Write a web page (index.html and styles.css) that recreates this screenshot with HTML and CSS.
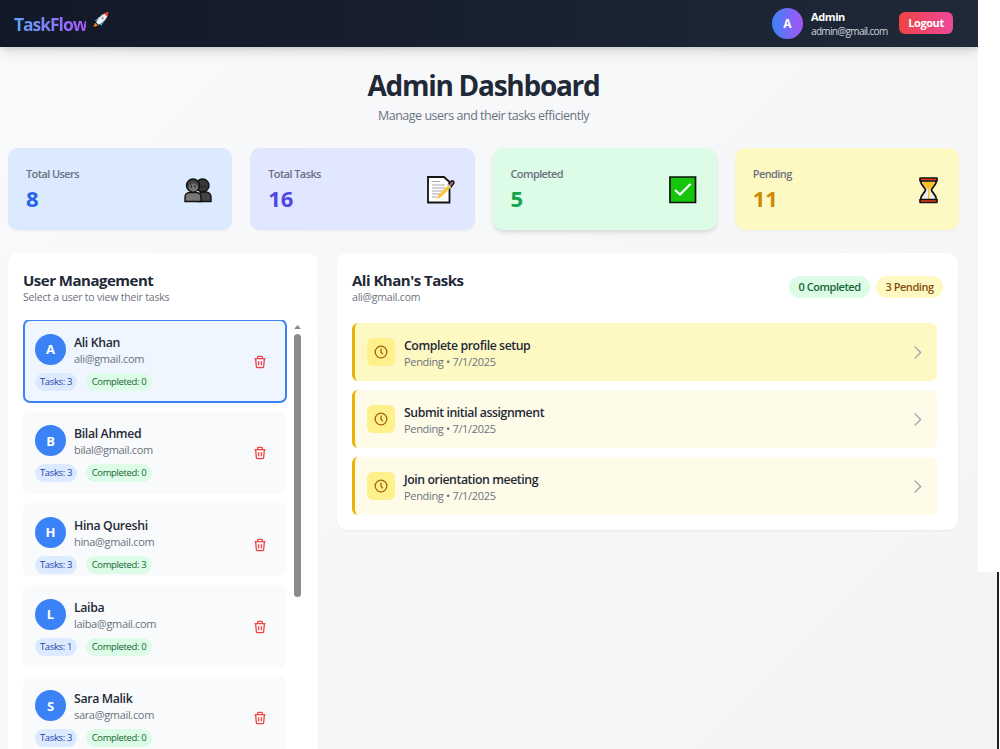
FILE: index.html
```html
<!DOCTYPE html>
<html lang="en">
<head>
<meta charset="utf-8">
<title>TaskFlow</title>
<link rel="stylesheet" href="styles.css">
</head>
<body>
<svg class="defs" width="0" height="0">
  <defs>
    <symbol id="trash" viewBox="0 0 16 16"><path d="M1.800 4.200h12.400M3 4.200l.8 8.800c.1 1 .6 1.500 1.500 1.500h5.400c.9 0 1.400-.5 1.500-1.500l.8-8.800M5.300 4V2.600c0-.7.4-1.100 1.100-1.100h3.200c.7 0 1.100.4 1.100 1.100V4M6.400 7v4.600M9.600 7v4.600"/></symbol>
    <symbol id="clock" viewBox="0 0 24 24"><circle cx="12" cy="12" r="10"/><path d="M12 6v6l3 4"/></symbol>
    <symbol id="chev" viewBox="0 0 24 24"><path d="M8 3l9 9-9 9"/></symbol>
  </defs>
</svg>
<div class="shell">
<div class="page">
  <header class="top">
    <div class="brand"><span class="logo">TaskFlow</span>
      <svg class="rocket" viewBox="0 0 18 18"><path d="M4.500 8L8 6.500 11.500 10 10 14l-2.500.5z M2 16l1-4 3 3z" fill="#10141f" stroke="#10141f" stroke-width="1.500"/><path d="M3 9.500l4-3.500 5 5-3 4-1.500-2-3-2z" fill="#27b5ee"/><path d="M1.500 16l1.500-4.200 3 3z" fill="#ff8c1a"/><path d="M4 11.500C5.500 7 9.500 2.500 16.300 1 16 7.500 11.500 12 6.500 14z" fill="#f2f2f2" stroke="#10141f" stroke-width=".5"/><path d="M11.800 2.600L16.600 .8l-1 5z" fill="#f03a3a"/><circle cx="10.600" cy="7" r="1.500" fill="#a9b3bd"/></svg>
    </div>
    <div class="account">
      <div class="avatar grad">A</div>
      <div class="who"><div class="who-name">Admin</div><div class="who-mail">admin@gmail.com</div></div>
      <div class="logout">Logout</div>
    </div>
  </header>
  <main class="main">
    <h1 class="title"><span>Admin Dashboard</span></h1>
    <p class="sub"><span>Manage users and their tasks efficiently</span></p>
    <section class="stats">
      <div class="stat blue"><div><div class="label">Total Users</div><div class="num">8</div></div>
        <svg class="emoji" viewBox="0 0 28 28"><g stroke="#111" stroke-width="1.400"><path d="M14 25.500v-5a5 5 0 015-4.500h3a5 5 0 015 5v4.500z" fill="#444"/><circle cx="18.500" cy="9.500" r="6.500" fill="#383838"/><path d="M1 25.500V21a4.500 4.500 0 014.500-4.500h7A4.500 4.500 0 0117 21v4.500z" fill="#777"/><circle cx="9" cy="9.500" r="6.500" fill="#444"/></g><path d="M5 11c0-3 3-2 5-4 1 2 4 1 4 4 0 6-9 6-9 0z" fill="#777"/><path d="M7.500 9.500v2M11 9.500v2M17.500 9.500v2M21 9.500v2" stroke="#111" stroke-width="1.200"/></svg></div>
      <div class="stat indigo"><div><div class="label">Total Tasks</div><div class="num">16</div></div>
        <svg class="emoji" viewBox="0 0 28 28"><path d="M1 1h16l5.500 5v20.500H1z" fill="#fff" stroke="#151515" stroke-width="1.800"/><path d="M5 5.500h8M5 9h13M5 12h13M5 15h12M5 18h9M5 21h5" stroke="#aaa" stroke-width="1.100"/><path d="M9.500 23l2-4L22.500 7.800l2.500 2.500-11.500 11.200z" fill="#f9c63d"/><path d="M21.500 8.500l3-3.500a1.700 1.700 0 012.200 2.300L24 11z" fill="#d77b75" stroke="#151515" stroke-width="1.500"/><path d="M21 8.500l2.800 2.700" stroke="#ddd" stroke-width="1.200"/></svg></div>
      <div class="stat green"><div><div class="label">Completed</div><div class="num">5</div></div>
        <svg class="emoji" viewBox="0 0 28 28"><path d="M1 1h25.500v25.500H1z" fill="#16c60c" stroke="#111" stroke-width="1.700"/><path d="M6 14l5 4.500L21.500 8" fill="none" stroke="#fff" stroke-width="2.200"/></svg></div>
      <div class="stat yellow"><div><div class="label">Pending</div><div class="num">11</div></div>
        <svg class="emoji" viewBox="0 0 28 28"><path d="M6.500 4c0 6 5 7.500 5 10s-5 4-5 10h16c0-6-5-7.500-5-10s5-4 5-10z" fill="#eee" stroke="#111" stroke-width="1.800"/><path d="M8.500 6h12.500c-.7 4.500-4.700 5.500-5.600 8V24h-1.400V14c-.9-2.500-4.800-3.500-5.500-8z" fill="#fbbf24"/><path d="M6 2h17v3H6zM6 23.500h17v3H6z" fill="#f03a17" stroke="#111" stroke-width="1.500" stroke-linejoin="round"/></svg></div>
    </section>
    <section class="cols">
      <div class="panel users">
        <h2 class="h2">User Management</h2>
        <p class="note">Select a user to view their tasks</p>
        <div class="scroll">
          <div class="list">
            <div class="user active"><div class="info"><div class="id"><div class="avatar">A</div><div><div class="name">Ali Khan</div><div class="mail">ali@gmail.com</div></div></div><div class="tags"><span class="tag tb">Tasks: 3</span><span class="tag tg">Completed: 0</span></div></div><svg class="trash"><use href="#trash"/></svg></div>
            <div class="user"><div class="info"><div class="id"><div class="avatar">B</div><div><div class="name">Bilal Ahmed</div><div class="mail">bilal@gmail.com</div></div></div><div class="tags"><span class="tag tb">Tasks: 3</span><span class="tag tg">Completed: 0</span></div></div><svg class="trash"><use href="#trash"/></svg></div>
            <div class="user short"><div class="info"><div class="id"><div class="avatar">H</div><div><div class="name">Hina Qureshi</div><div class="mail">hina@gmail.com</div></div></div><div class="tags"><span class="tag tb">Tasks: 3</span><span class="tag tg">Completed: 3</span></div></div><svg class="trash"><use href="#trash"/></svg></div>
            <div class="user"><div class="info"><div class="id"><div class="avatar">L</div><div><div class="name">Laiba</div><div class="mail">laiba@gmail.com</div></div></div><div class="tags"><span class="tag tb">Tasks: 1</span><span class="tag tg">Completed: 0</span></div></div><svg class="trash"><use href="#trash"/></svg></div>
            <div class="user"><div class="info"><div class="id"><div class="avatar">S</div><div><div class="name">Sara Malik</div><div class="mail">sara@gmail.com</div></div></div><div class="tags"><span class="tag tb">Tasks: 3</span><span class="tag tg">Completed: 0</span></div></div><svg class="trash"><use href="#trash"/></svg></div>
          </div>
          <div class="bar"><div class="arrow"></div><div class="thumb"></div></div>
        </div>
      </div>
      <div class="panel tasks">
        <div class="head">
          <div><h2 class="h2">Ali Khan's Tasks</h2><p class="note">ali@gmail.com</p></div>
          <div class="pills"><span class="pill pg">0 Completed</span><span class="pill py">3 Pending</span></div>
        </div>
        <div class="task hot"><span class="tile"><svg class="clock"><use href="#clock"/></svg></span><div class="tt"><div class="tname">Complete profile setup</div><div class="tmeta">Pending • 7/1/2025</div></div><svg class="chev"><use href="#chev"/></svg></div>
        <div class="task"><span class="tile"><svg class="clock"><use href="#clock"/></svg></span><div class="tt"><div class="tname">Submit initial assignment</div><div class="tmeta">Pending • 7/1/2025</div></div><svg class="chev"><use href="#chev"/></svg></div>
        <div class="task"><span class="tile"><svg class="clock"><use href="#clock"/></svg></span><div class="tt"><div class="tname">Join orientation meeting</div><div class="tmeta">Pending • 7/1/2025</div></div><svg class="chev"><use href="#chev"/></svg></div>
      </div>
    </section>
  </main>
</div>
<div class="edge"><div class="edge-top"></div><div class="edge-low"></div></div>
</div>
</body>
</html>
```
FILE: styles.css
```css
* { box-sizing: border-box; margin: 0; padding: 0; }
body { font-family: "Open Sans", "Noto Sans", sans-serif; background: #fff; color: #1f2937; }
.defs { display: block; height: 0; }
.shell { display: flex; width: 1000px; height: 749px; overflow: hidden; }
.page { width: 978px; height: 749px; flex: none; display: flex; flex-direction: column; background: linear-gradient(135deg, #f9fafb, #f3f4f6); }
.edge { flex: 1; display: flex; flex-direction: column; }
.edge-top { height: 572px; background: #fff; }
.edge-low { flex: 1; background: #f3f4f6; border-right: 2px solid #222; margin-right: 1px; }
.top { height: 47px; flex: none; display: flex; justify-content: space-between; background: linear-gradient(90deg, #111827, #1f2937); box-shadow: 0 7px 14px -2px rgba(0,0,0,.11), 0 2px 5px rgba(0,0,0,.1); padding: 0 25px 0 14px; }
.brand { display: flex; padding-top: 11px; }
.logo { font-size: 17.500px; font-weight: 700; line-height: 26px; letter-spacing: -1.050px; background: linear-gradient(90deg, #60a5fa, #a855f7); -webkit-background-clip: text; background-clip: text; color: transparent; width: 72px; white-space: nowrap; }
.rocket { width: 18px; height: 18px; margin-left: 6px; }
.account { display: flex; align-items: center; height: 46px; }
.avatar { width: 31px; height: 31px; border-radius: 50%; background: #3b82f6; color: #fff; font-weight: 700; font-size: 13px; display: flex; align-items: center; justify-content: center; flex: none; }
.grad { background: linear-gradient(90deg, #3b82f6, #a855f7); font-size: 12px; }
.who { margin-left: 8px; width: 88px; white-space: nowrap; padding-top: 1px; }
.who-name { color: #fff; font-weight: 700; font-size: 11px; line-height: 14px; letter-spacing: -.4px; }
.who-mail { color: #d1d5db; font-size: 10px; line-height: 14px; letter-spacing: -.670px; }
.logout { width: 54px; height: 22px; border-radius: 6px; background: linear-gradient(90deg, #ef4444, #ec4899); color: #fff; font-weight: 700; font-size: 11px; line-height: 22px; text-align: center; letter-spacing: -.4px; }
.main { padding: 20px 19px 0 8px; flex: 1; min-height: 0; display: flex; flex-direction: column; }
.title { font-size: 28px; font-weight: 700; line-height: 36px; height: 37px; flex: none; text-align: center; letter-spacing: -1.280px; }
.sub { font-size: 12.500px; line-height: 20px; color: #6b7280; text-align: center; letter-spacing: -.480px; height: 44px; padding-top: 2px; flex: none; }
.stats { display: grid; grid-template-columns: repeat(4, 1fr); gap: 18px; height: 82px; flex: none; }
.stat { border-radius: 10px; padding: 17px 18px 0; display: flex; justify-content: space-between; box-shadow: 0 1px 2px rgba(0,0,0,.05); }
.label { font-size: 11px; font-weight: 600; line-height: 17px; color: #6b7280; letter-spacing: -.600px; }
.num { font-size: 22px; font-weight: 700; line-height: 33px; }
.emoji { width: 28px; height: 28px; margin: 11px 2px 0 0; }
.blue { background: #dbeafe; } .blue .num { color: #2563eb; }
.indigo { background: #e0e7ff; } .indigo .num { color: #4f46e5; }
.green { background: #dcfce7; box-shadow: 0 3px 5px -1px rgba(0,0,0,.14); } .green .num { color: #16a34a; }
.yellow { background: #fef9c3; } .yellow .num { color: #ca8a04; }
.yellow .emoji { margin-right: -1px; }
.cols { display: flex; align-items: flex-start; gap: 19px; margin-top: 23px; flex: none; }
.panel { background: #fff; border-radius: 10px; box-shadow: 0 1px 2px rgba(0,0,0,.05); flex: none; }
.users { width: 310px; height: 600px; padding: 15px 14px 0 15px; }
.tasks { width: 621px; height: 277px; padding: 15px 15px 0; }
.h2 { font-size: 15px; font-weight: 700; line-height: 24px; color: #1f2937; letter-spacing: -.500px; }
.note { font-size: 10.500px; line-height: 11px; color: #6b7280; letter-spacing: -.2px; }
.scroll { display: flex; margin-top: 17px; height: 540px; overflow: hidden; }
.list { display: flex; flex-direction: column; gap: 9.300px; width: 264px; flex: none; }
.user { height: 82px; flex: none; background: #f9fafb; border-radius: 7px; width: 263px; padding: 13.500px 19px 0 12px; display: flex; justify-content: space-between; }
.active { background: #eff6ff; width: 264px; height: 84px; margin-top: -1px; margin-bottom: -.500px; border: 2px solid #3b82f6; padding: 12.500px 18px 0 10px; }
.short { height: 73px; }
.id { display: flex; gap: 8px; height: 39px; }
.name { font-size: 12.300px; font-weight: 600; line-height: 17px; letter-spacing: -.350px; white-space: nowrap; }
.mail { font-size: 11px; line-height: 16px; color: #6b7280; letter-spacing: -.330px; white-space: nowrap; }
.tags { display: flex; gap: 9px; }
.tag { height: 18px; border-radius: 9px; font-size: 9.500px; line-height: 18px; text-align: center; letter-spacing: -.360px; white-space: nowrap; }
.tb { width: 42px; background: #dbeafe; color: #1e40af; }
.tg { width: 66px; background: #dcfce7; color: #166534; }
.trash { width: 14px; height: 14px; margin-top: 21px; fill: none; stroke: #ef4444; stroke-width: 1.500; flex: none; }
.bar { width: 7px; margin-left: 7px; padding-top: 5px; }
.arrow { width: 7px; height: 4px; background: #8b8b8b; clip-path: polygon(50% 0, 100% 100%, 0 100%); }
.thumb { width: 7px; height: 263px; margin-top: 5px; border-radius: 4px; background: #8b8b8b; }
.head { display: flex; justify-content: space-between; height: 55px; }
.pills { display: flex; gap: 6px; margin-top: 8px; }
.pill { height: 21.500px; border-radius: 11px; font-size: 11px; font-weight: 600; line-height: 21px; text-align: center; letter-spacing: -.450px; white-space: nowrap; }
.pg { width: 81px; background: #dcfce7; color: #166534; }
.py { width: 67px; background: #fef9c3; color: #854d0e; }
.task { width: 585px; height: 58px; margin-bottom: 9px; border-left: 3px solid #eab308; border-radius: 6px; background: #fefce8; display: flex; align-items: center; padding: 0 12px 0 12px; }
.hot { background: #fef9c3; }
.tile { width: 28px; height: 28px; border-radius: 6px; background: #fef08a; display: flex; align-items: center; justify-content: center; }
.clock { width: 14px; height: 14px; fill: none; stroke: #a16207; stroke-width: 2.200; }
.tt { flex: 1; margin-left: 9px; margin-top: 2px; }
.tname { font-size: 12.300px; font-weight: 600; line-height: 17px; letter-spacing: -.430px; }
.tmeta { font-size: 11px; line-height: 16px; color: #6b7280; letter-spacing: -.320px; }
.chev { width: 15px; height: 15px; fill: none; stroke: #9ca3af; stroke-width: 2.200; stroke-linecap: round; }
```
